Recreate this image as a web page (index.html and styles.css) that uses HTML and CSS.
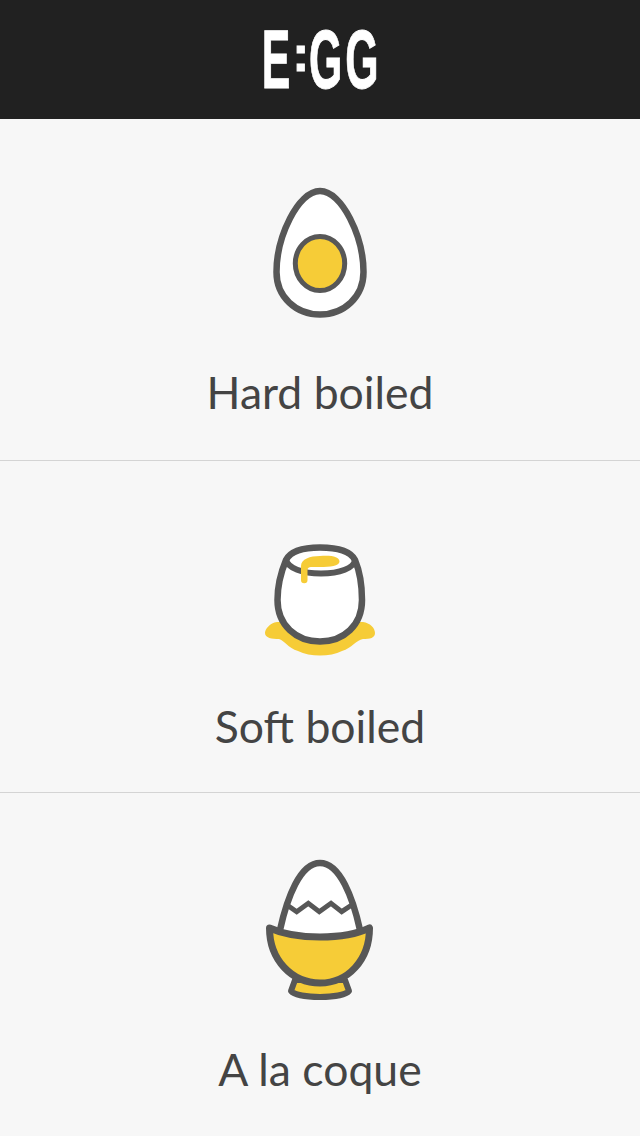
FILE: index.html
```html
<!DOCTYPE html>
<html>
<head>
    <title>E:GG</title>
    <link rel="stylesheet" href="styles.css">
</head>
<body>
    <header class="top-bar">
        <h1 class="logo">E<span class="logo-colon">:</span>GG</h1>
    </header>

    <a class="egg-row egg-row-hard" href="#">
        <svg class="egg-icon" width="140" height="155" viewBox="0 0 140 155">
            <path class="shell" d="M70 16C92 16 113.500 62 113.500 97C113.500 122 94 139.500 70 139.500C46 139.500 26.500 122 26.500 97C26.500 62 48 16 70 16Z"/>
            <ellipse class="yolk thin" cx="70" cy="88.500" rx="24.700" ry="27"/>
        </svg>
        <span class="egg-name">Hard boiled</span>
    </a>

    <a class="egg-row egg-row-soft" href="#">
        <svg class="egg-icon" width="140" height="140" viewBox="0 0 140 140">
            <path class="puddle" d="M27 92C20 93 15 99 15 103C15 108 22 109 29 109C34 110 38 118 48 121C60 127 80 127 92 121C102 118 106 110 113 109C120 109 125 108 125 103C125 98 120 93 113 92Z"/>
            <path class="shell" d="M36 30C31 42 27.500 56 27.500 70C27.500 95 46 111.500 70 111.500C94 111.500 112 95 112 70C112 56 110 42 105 30C100 20 86 17.500 70 17.500C54 17.500 41 20 36 30Z"/>
            <path class="rim" d="M36 30C38 38 52 43.500 71 43.500C90 43.500 104 38 105 30"/>
            <path class="spill" d="M51 50V36C51 29 60 26 70 26C82 25 89.500 27 89.500 31.500C89.500 36 80 37 70 37C62 37 57.500 36 57.500 40V50A3.250 3.250 0 0 1 51 50Z"/>
        </svg>
        <span class="egg-name">Soft boiled</span>
    </a>

    <a class="egg-row egg-row-coque" href="#">
        <svg class="egg-icon" width="140" height="160" viewBox="0 0 140 160">
            <path class="shell" d="M70 13C90 13 103 48 110 80V88H30V80C37 48 50 13 70 13Z"/>
            <path class="crack" d="M37 55L46.700 61.700L58.300 53.300L69.300 61.700L81 53.300L91.700 61.700L101.700 55"/>
            <path class="yolk foot" d="M45 130L41 141C48 149 92 149 99 141L95 130Z"/>
            <path class="yolk" d="M19.500 78C35 85 50 87 70 87C90 87 105 85 119.500 78C119.500 110 98 133 70 133C42 133 19.500 110 19.500 78Z"/>
        </svg>
        <span class="egg-name">A la coque</span>
    </a>
</body>
</html>
```

FILE: styles.css
```css
body {
    margin: 0;
    background-color: #f7f7f7;
    font-family: Lato, "Open Sans", sans-serif;
}

.top-bar {
    display: flex;
    justify-content: center;
    align-items: center;
    height: 119px;
    background-color: #212121;
}

.logo {
    margin: 0;
    padding-left: 8px;
    color: #ffffff;
    font-family: "Liberation Sans", sans-serif;
    font-size: 84px;
    font-weight: 700;
    line-height: 119px;
    letter-spacing: 6px;
    -webkit-text-stroke: 1px #ffffff;
    transform: scaleX(0.51);
}

.logo-colon {
    display: inline-block;
    margin: 0 8px 0 6px;
    font-size: 50px;
    line-height: 1;
    letter-spacing: 0;
    vertical-align: 17px;
    transform: scaleX(2);
}

.egg-row {
    display: flex;
    flex-direction: column;
    align-items: center;
    color: #444444;
    text-decoration: none;
    border-bottom: 1px solid #d4d4d4;
}

.egg-row-hard {
    height: 342px;
    padding-top: 56px;
    box-sizing: border-box;
}

.egg-row-soft {
    height: 332px;
    padding-top: 69px;
    box-sizing: border-box;
}

.egg-row-coque {
    padding-top: 57px;
    border-bottom: none;
}

.egg-name {
    font-size: 44.500px;
    line-height: 54px;
}

.egg-row-hard .egg-name {
    margin-top: 35px;
}

.egg-row-soft .egg-name {
    margin-top: 29px;
}

.egg-row-coque .egg-name {
    margin-top: 32px;
}

.shell {
    fill: #ffffff;
    stroke: #575757;
    stroke-width: 6.500;
}

.yolk {
    fill: #f6cc37;
    stroke: #575757;
    stroke-width: 7;
    stroke-linejoin: round;
}

.yolk.thin {
    stroke-width: 5;
}

.yolk.foot {
    stroke-width: 6;
}

.rim,
.crack {
    fill: none;
    stroke: #575757;
    stroke-width: 6;
}

.crack {
    stroke-width: 5;
}

.puddle,
.spill {
    fill: #f6cc37;
}
```
